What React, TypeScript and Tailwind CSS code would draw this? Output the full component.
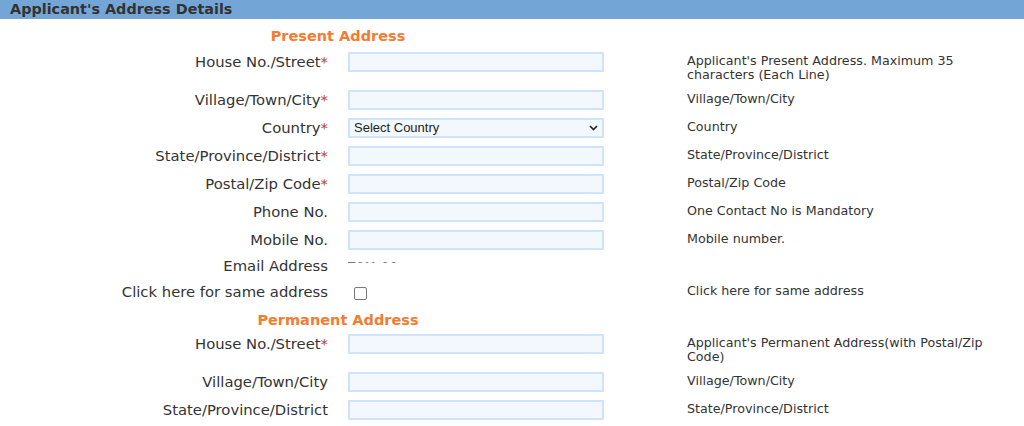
import { ReactNode } from "react";

type Field = {
  label: string;
  required?: boolean;
  help?: ReactNode;
  kind?: "text" | "select" | "email" | "check";
};

const present: Field[] = [
  {
    label: "House No./Street",
    required: true,
    help: (
      <>
        Applicant's Present Address. Maximum 35
        <br />
        characters (Each Line)
      </>
    ),
  },
  { label: "Village/Town/City", required: true, help: "Village/Town/City" },
  { label: "Country", required: true, help: "Country", kind: "select" },
  { label: "State/Province/District", required: true, help: "State/Province/District" },
  { label: "Postal/Zip Code", required: true, help: "Postal/Zip Code" },
  { label: "Phone No.", help: "One Contact No is Mandatory" },
  { label: "Mobile No.", help: "Mobile number." },
  { label: "Email Address", kind: "email" },
  { label: "Click here for same address", help: "Click here for same address", kind: "check" },
];

const permanent: Field[] = [
  {
    label: "House No./Street",
    required: true,
    help: (
      <>
        Applicant's Permanent Address(with Postal/Zip
        <br />
        Code)
      </>
    ),
  },
  { label: "Village/Town/City", help: "Village/Town/City" },
  { label: "State/Province/District", help: "State/Province/District" },
];

const inputCls =
  "block h-[20px] w-[256px] border-2 border-[#cfe4fa] bg-[#f3f8fe] px-1 text-[13px] outline-none";

function Row({ f }: { f: Field }) {
  const rowPad =
    f.kind === "email" ? "pt-[2px] pb-[4px]" : f.kind === "check" ? "pt-[2px] pb-[2px]" : "py-[4px]";
  return (
    <div className={`grid grid-cols-[338px_338px_1fr] items-start ${rowPad}`}>
      <div className="pr-[10px] text-right text-[14.8px] leading-[20px] text-[#333]">
        {f.label}
        {f.required && <span className="text-[#c0392b]">*</span>}
      </div>
      <div className="pl-[10px]">
        {f.kind === "select" ? (
          <div className="relative w-[256px]">
            <select
              className={`${inputCls} appearance-none font-['Liberation_Sans',Arial,sans-serif] leading-[16px] text-[#222]`}
            >
              <option>Select Country</option>
            </select>
            <svg
              className="pointer-events-none absolute right-[6px] top-[7px]"
              width="9"
              height="6"
              viewBox="0 0 9 6"
            >
              <path d="M1 1l3.5 3.5L8 1" fill="none" stroke="#222" strokeWidth="1.6" />
            </svg>
          </div>
        ) : f.kind === "email" ? (
          <div className="mt-[4px] h-[3px] w-[60px] overflow-hidden whitespace-nowrap text-[12px] leading-[14px] tracking-[1px] text-[#777]">
            T0M 00
          </div>
        ) : f.kind === "check" ? (
          <input
            type="checkbox"
            className="m-0 ml-[6px] mt-[5px] h-[13px] w-[13px] appearance-none rounded-[2px] border border-[#777] bg-white"
          />
        ) : (
          <input type="text" className={inputCls} />
        )}
      </div>
      <div className="pl-[11px] pt-[2px] text-[12.7px] leading-[14px] text-[#333]">{f.help}</div>
    </div>
  );
}

function Heading({ children }: { children: ReactNode }) {
  return (
    <div className="w-[676px] text-center text-[14.5px] font-bold leading-[18px] text-[#f47b30]">
      {children}
    </div>
  );
}

export default function App() {
  return (
    <div className="h-[426px] w-[1024px] overflow-hidden bg-white font-['DejaVu_Sans',Verdana,sans-serif]">
      <div className="h-[19px] bg-[#73a6d7] pl-[10px] text-[14.4px] font-bold leading-[19px] text-[#333]">
        Applicant's Address Details
      </div>
      <div className="pt-[8px]">
        <Heading>Present Address</Heading>
      </div>
      <div className="pt-[3px]">
        {present.map((f, i) => (
          <Row key={i} f={f} />
        ))}
      </div>
      <div className="pt-[2px]">
        <Heading>Permanent Address</Heading>
      </div>
      <div className="pt-[1px]">
        {permanent.map((f, i) => (
          <Row key={i} f={f} />
        ))}
      </div>
    </div>
  );
}
